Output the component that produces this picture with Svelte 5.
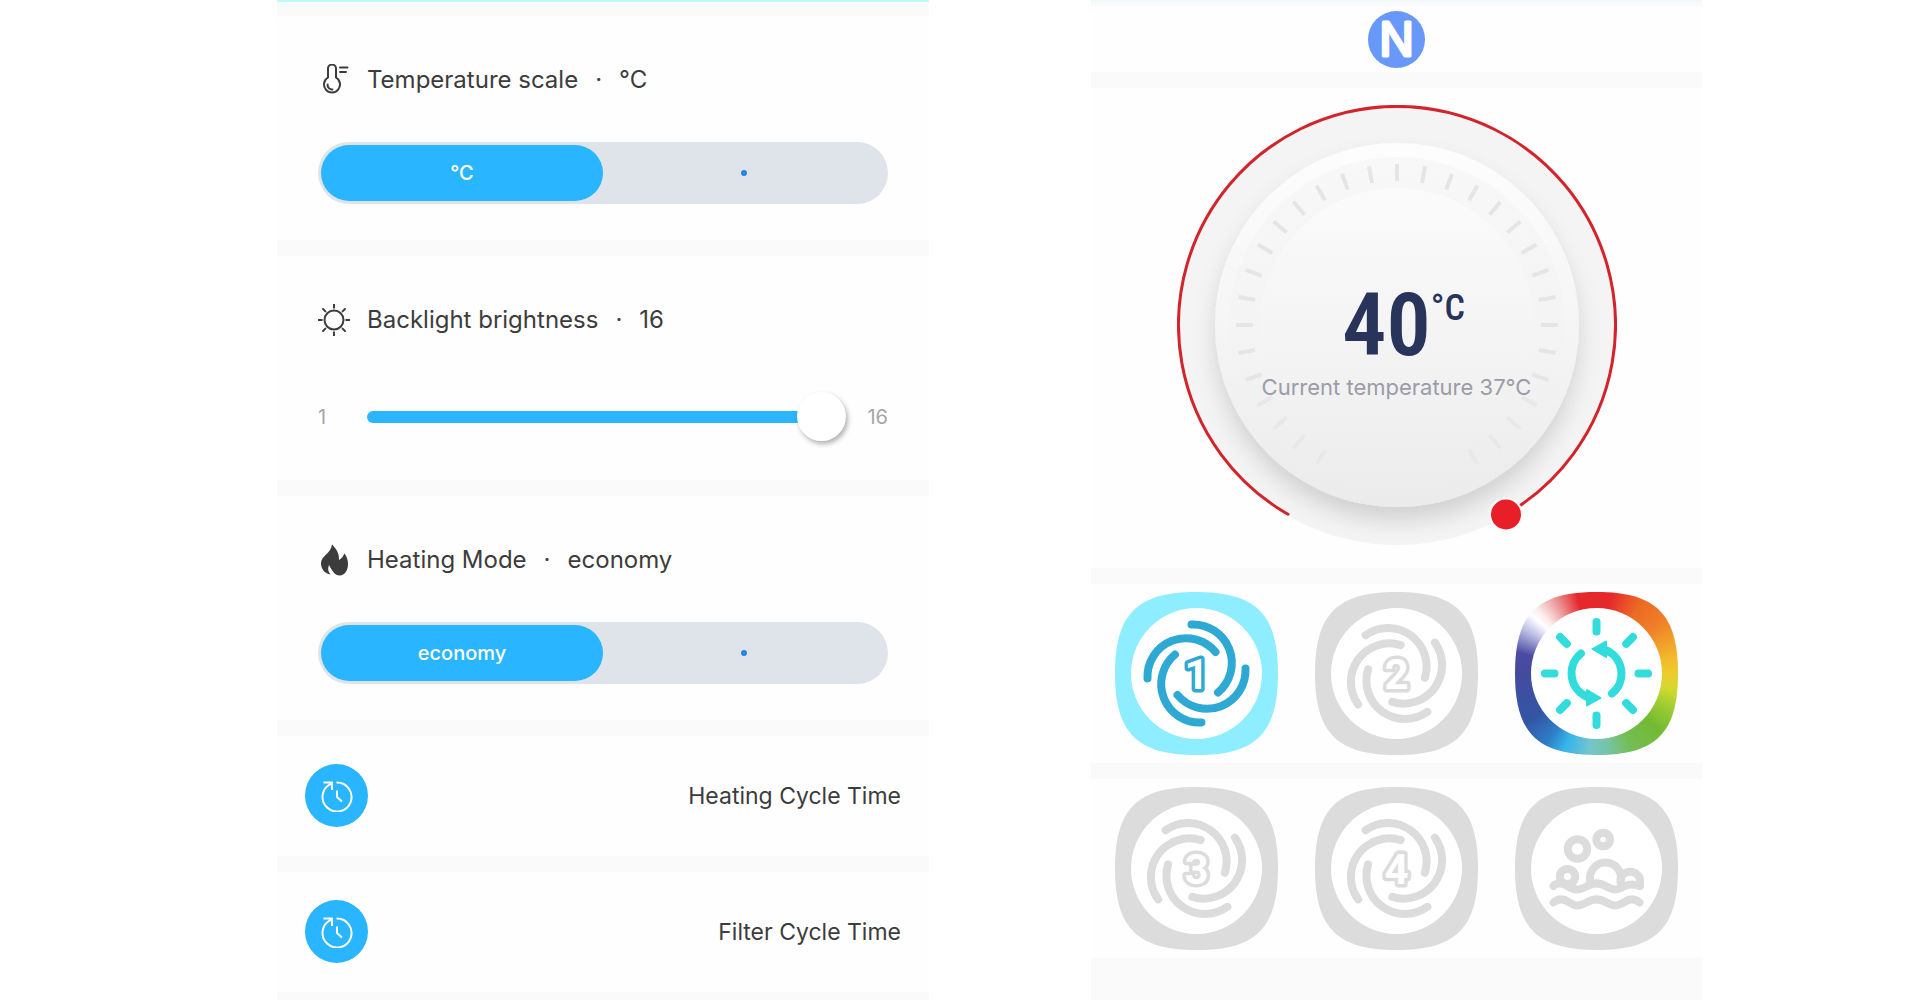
<script lang="ts">
  let scale = $state(0);
  let brightness = $state(16);
  let mode = $state(0);
  let active = $state('Pump 1');

  const cycles = ['Heating Cycle Time', 'Filter Cycle Time'];
  const ticks = Array.from({ length: 31 }, (_, i) => i * 10 - 150);
  const spokes = [0, 45, 90, 135, 180, 225, 270, 315];
  const arms = [0, 90, 180, 270];
  const rows = [
    [
      { name: 'Pump 1', digit: '1' },
      { name: 'Pump 2', digit: '2' },
      { name: 'Light', kind: 'light' }
    ],
    [
      { name: 'Pump 3', digit: '3' },
      { name: 'Pump 4', digit: '4' },
      { name: 'Bubbles', kind: 'bubbles' }
    ]
  ];
</script>

{#snippet segment(options, selected, pick)}
  <div class="segment">
    {#each options as option, i}
      <button
        class:on={selected === i}
        aria-pressed={selected === i}
        aria-label={option || 'Other'}
        onclick={() => pick(i)}
      >
        {#if option}{option}{:else}<span class="dot"></span>{/if}
      </button>
    {/each}
  </div>
{/snippet}

<main>
  <div class="panel settings">
    <section class="card">
      <h2>
        <svg class="icon" viewBox="0 0 32 32">
          <path d="M10 13.5V4.5a4 4 0 0 1 8 0V13.5a8 8 0 1 1 -8 0Z" />
          <path d="M9.6 20.5a4.5 4.5 0 0 0 4.8 5M22 3.5h7.500M22 8h6" />
        </svg>
        <span>Temperature scale</span><span>·</span><span>°C</span>
      </h2>
      {@render segment(['°C', ''], scale, (i) => (scale = i))}
    </section>

    <section class="card">
      <h2>
        <svg class="icon" viewBox="0 0 32 32">
          <circle cx="16" cy="16" r="9.5" />
          {#each spokes as angle}
            <path d="M16 0.5V3.8" transform="rotate({angle} 16 16)" />
          {/each}
        </svg>
        <label for="brightness">Backlight brightness</label><span>·</span><span>{brightness}</span>
      </h2>
      <div class="slider">
        <span class="min">1</span>
        <input
          id="brightness"
          type="range"
          min="1"
          max="16"
          bind:value={brightness}
          style="--fill: {((brightness - 1) / 15) * 100}%"
        />
        <span class="max">16</span>
      </div>
    </section>

    <section class="card">
      <h2>
        <svg class="icon flame" viewBox="0 0 32 32">
          <path
            d="M14 0.3C17 4 21.5 8 21 16C23.5 14.5 25.5 12 26.3 9.5C29 12.5 30 16 30 20C30 26 27 31.5 21.6 31.5C16.5 31.5 14.5 27 11 21C9.5 24.5 10 27.5 12.5 30.5C6.5 29.5 3 24.5 3 19.5C3 11.5 13 10 14 0.3Z"
          />
        </svg>
        <span>Heating Mode</span><span>·</span><span>economy</span>
      </h2>
      {@render segment(['economy', ''], mode, (i) => (mode = i))}
    </section>

    {#each cycles as cycle}
      <button class="cycle">
        <span class="badge">
          <svg viewBox="-16 -17 32 32">
            <path d="M-0.5 -14.5A14.5 14.5 0 1 1 -6 -13.2M-13.5 -14.5H-5V-7" />
            <path d="M0 -6.5V0L5 4.5" />
          </svg>
        </span>
        {cycle}
      </button>
    {/each}
  </div>

  <div class="panel control">
    <header>
      <svg class="logo" viewBox="0 0 57 57" role="img" aria-label="N">
        <circle cx="28.5" cy="28.5" r="28.5" />
        <text x="28.5" y="45">N</text>
      </svg>
    </header>

    <section class="dial">
      <svg viewBox="-220 -220 440 440">
        <defs>
          <linearGradient id="rim" x1="0" y1="0" x2="0" y2="1">
            <stop offset="0" stop-color="#fdfdfd" />
            <stop offset="0.5" stop-color="#f5f5f6" />
            <stop offset="1" stop-color="#ebebeb" />
          </linearGradient>
          <linearGradient id="band" x1="0" y1="0" x2="0" y2="1">
            <stop offset="0" stop-color="#f8f8f8" />
            <stop offset="0.6" stop-color="#f3f3f4" />
            <stop offset="1" stop-color="#ececec" />
          </linearGradient>
          <linearGradient id="face" x1="0" y1="0" x2="0" y2="1">
            <stop offset="0" stop-color="#fbfbfb" />
            <stop offset="1" stop-color="#eeeeee" />
          </linearGradient>
          <filter id="drop" x="-20%" y="-20%" width="140%" height="140%">
            <feDropShadow dx="0" dy="14" stdDeviation="11" flood-color="#000" flood-opacity="0.14" />
          </filter>
        </defs>
        <circle r="220" fill="#f4f4f4" />
        <circle r="182" fill="url(#rim)" filter="url(#drop)" />
        <circle r="168" fill="url(#band)" />
        <circle r="137" fill="url(#face)" />
        {#each ticks as angle}
          <rect
            x="-2"
            y="-161"
            width="4"
            height="17"
            fill={Math.abs(angle) > 110 ? '#e8e8e9' : '#e5e5e7'}
            transform="rotate({angle})"
          />
        {/each}
        <path class="arc" d="M-109 189.3A218.5 218.5 0 1 1 109 189.3" />
        <circle class="knob" cx="109" cy="189.5" r="16" />
      </svg>
      <div class="readout">
        <p class="target">40<sup>°C</sup></p>
        <p class="current">Current temperature 37°C</p>
      </div>
    </section>

    {#each rows as row}
      <section class="tiles">
        {#each row as tile}
          <button aria-label={tile.name} onclick={() => (active = tile.name)}>
            <svg
              class="tile {tile.kind ?? 'pump'}"
              class:active={active === tile.name}
              viewBox="-81.5 -81.5 163 163"
            >
              <circle class="hole" r="65.5" />
              {#if tile.kind === 'light'}
                {#each spokes as angle}
                  <path class="spoke" d="M0 -51.5V-42" transform="rotate({angle})" />
                {/each}
                {#each [0, 180] as angle}
                  <g transform="rotate({angle})">
                    <path class="turn" d="M-15.5 -20A25.5 25.5 0 0 0 -9 23.5" />
                    <path class="head" d="M-9.5 16.5V32L4 24.5Z" />
                  </g>
                {/each}
              {:else if tile.kind === 'bubbles'}
                <circle cx="-19" cy="-19.5" r="9.7" stroke-width="8" />
                <circle cx="6.7" cy="-29" r="6.8" />
                <circle cx="-29" cy="8" r="7.6" />
                <path d="M-6 13.5A15.5 15.5 0 1 1 24 13.5" />
                <path d="M24 10A10 9.5 0 0 1 43.5 14V17.5" />
                <path
                  d="M-43 17.5C-38 13 -33 15 -29 17.5C-20 23 -16 21 -9 17.5C-3 14 3 14 9 17.5C15 21 20 23 28 17.5C33 15.5 38 15.5 43 17.5"
                />
                <path
                  d="M-43 34C-38 30 -33 30 -28 33.5C-20 39 -16 37 -9 33.5C-3 30 3 30 9 33.5C15 37 20 39 28 33.5C33 30 38 30 43 34"
                />
              {:else}
                {#each arms as angle}
                  <path
                    d="M-5 -49A38.5 38.5 0 0 1 21.5 19"
                    transform="rotate({active === tile.name ? angle : angle - 33})"
                  />
                {/each}
                <text y="15">{tile.digit}</text>
              {/if}
            </svg>
          </button>
        {/each}
      </section>
    {/each}
  </div>
</main>

<style>
  :global(body) {
    background: #fff;
    font-family: Inter, 'Liberation Sans', sans-serif;
    color: #3c3c3c;
  }

  main {
    display: grid;
    grid-template-columns: 652fr 611fr;
    gap: 162px;
    min-height: 100vh;
    padding: 0 218px 0 277px;
    box-sizing: border-box;
  }

  button {
    border: 0;
    padding: 0;
    background: none;
    font: inherit;
    color: inherit;
    cursor: pointer;
  }

  .panel {
    display: flex;
    flex-direction: column;
    gap: 16px;
    background: #fafafa;
  }

  .settings {
    border-top: 2px solid #bdfafb;
    padding: 14px 0 8px;
  }

  .card {
    box-sizing: border-box;
    height: 224px;
    padding: 48px 41px 0;
    background: #fefefe;
  }

  h2 {
    display: flex;
    align-items: center;
    gap: 17px;
    margin: 0;
    font-size: 24px;
    line-height: 32px;
    font-weight: 400;
  }

  .icon {
    width: 32px;
    height: 32px;
    fill: none;
    stroke: #3c3c3c;
    stroke-width: 2;
    stroke-linecap: round;
  }

  .flame {
    fill: #3c3c3c;
    stroke: none;
  }

  .segment {
    display: grid;
    grid-template-columns: 1fr 1fr;
    margin-top: 46px;
    padding: 3px;
    border-radius: 31px;
    background: #dfe4ea;

    button {
      display: grid;
      place-items: center;
      height: 56px;
      border-radius: 28px;
      font-size: 20px;
      font-weight: 500;
    }

    .on {
      background: #29b5ff;
      color: #fff;
    }
  }

  .dot {
    width: 6px;
    height: 6px;
    border-radius: 50%;
    background: #1e88e5;
  }

  .slider {
    display: flex;
    align-items: center;
    margin-top: 56px;
    height: 50px;
    font-size: 20px;
    color: #a6a6a6;

    .min {
      width: 49px;
    }

    .max {
      width: 42px;
      text-align: right;
    }
  }

  input {
    flex: 1;
    min-width: 0;
    height: 50px;
    margin: 0;
    appearance: none;
    background: none;

    &::-webkit-slider-runnable-track {
      height: 12px;
      border-radius: 6px;
      background: linear-gradient(90deg, #2bb5fc var(--fill), #dfe4ea var(--fill));
    }

    &::-webkit-slider-thumb {
      appearance: none;
      width: 49px;
      height: 49px;
      margin-top: -19px;
      border-radius: 50%;
      background: #fff;
      box-shadow: 2px 3px 5px rgb(0 0 0 / 0.3);
    }
  }

  .cycle {
    display: flex;
    align-items: center;
    justify-content: space-between;
    padding: 28px 28px 29px;
    background: #fefefe;
    font-size: 23px;
  }

  .badge {
    display: grid;
    place-items: center;
    width: 63px;
    height: 63px;
    border-radius: 50%;
    background: #29b5ff;

    svg {
      width: 32px;
      height: 32px;
      fill: none;
      stroke: #fff;
      stroke-width: 2;
    }
  }

  .control {
    border-top: 2px solid #f0f9fa;
    padding-top: 4px;
  }

  header {
    display: grid;
    place-items: center;
    height: 66px;
    background: #fefefe;
  }

  .logo {
    width: 57px;
    height: 57px;
    fill: #6798fa;

    text {
      fill: #fff;
      stroke: #fff;
      stroke-width: 3;
      stroke-linejoin: round;
      font-size: 46px;
      font-weight: 400;
      text-anchor: middle;
    }
  }

  .dial {
    display: grid;
    justify-items: center;
    padding: 17px 0 23px;
    background: #fefefe;

    > * {
      grid-area: 1 / 1;
    }

    > svg {
      width: 440px;
      height: 440px;
    }
  }

  .arc {
    fill: none;
    stroke: #d3242c;
    stroke-width: 3;
    stroke-linecap: round;
  }

  .knob {
    fill: #e81f27;
    stroke: #fbfbfb;
    stroke-width: 2;
  }

  .readout {
    padding-top: 184px;
    text-align: center;
  }

  p {
    margin: 0;
  }

  .target {
    display: flex;
    justify-content: center;
    padding-left: 14px;
    font-family: 'Liberation Sans Narrow', 'Roboto Condensed', 'DejaVu Sans Condensed', sans-serif;
    font-size: 88px;
    line-height: 72px;
    font-weight: 600;
    color: #28345a;
  }

  sup {
    font-size: 36px;
    line-height: 38px;
    font-weight: 500;
  }

  .current {
    margin-top: 12px;
    font-size: 22px;
    line-height: 28px;
    color: #9b9ca8;
  }

  .tiles {
    display: flex;
    justify-content: space-between;
    padding: 8px 24px;
    background: #fefefe;
  }

  .tile {
    display: block;
    width: 163px;
    height: 163px;
    background: #dcdcdc;
    clip-path: path(
      'M81.5 0C141 0 163 22 163 81.5C163 141 141 163 81.5 163C22 163 0 141 0 81.5C0 22 22 0 81.5 0Z'
    );
    fill: none;
    stroke: #dcdcdc;
    stroke-width: 8;
    stroke-linecap: round;

    text {
      fill: #fff;
      paint-order: stroke;
      stroke-width: 7;
      stroke-linejoin: round;
      font-family: Roboto, sans-serif;
      font-size: 42px;
      font-weight: 700;
      text-anchor: middle;
    }
  }

  .hole {
    fill: #fff;
    stroke: none;
  }

  .pump.active {
    background: #8eedff;
    stroke: #2da9d4;
  }

  .light {
    stroke: #32dcdc;
    background: conic-gradient(
      #e5282c 0deg,
      #e5282c 10deg,
      #ed6a25 32deg,
      #ef7d27 50deg,
      #f3b92c 78deg,
      #eecb2c 90deg,
      #d0da30 102deg,
      #9ccb33 116deg,
      #72ba33 132deg,
      #74bd55 155deg,
      #76c4a8 172deg,
      #74c5cc 185deg,
      #35b5ea 203deg,
      #2e7cc6 216deg,
      #3355a5 235deg,
      #444b9f 268deg,
      #4a4ba1 285deg,
      #b9bbe2 301deg,
      #fff 312deg,
      #fbeaea 318deg,
      #ea8f8f 332deg,
      #e5282c 346deg
    );
  }

  .head {
    fill: #32dcdc;
    stroke-width: 2;
    stroke-linejoin: round;
  }
</style>
